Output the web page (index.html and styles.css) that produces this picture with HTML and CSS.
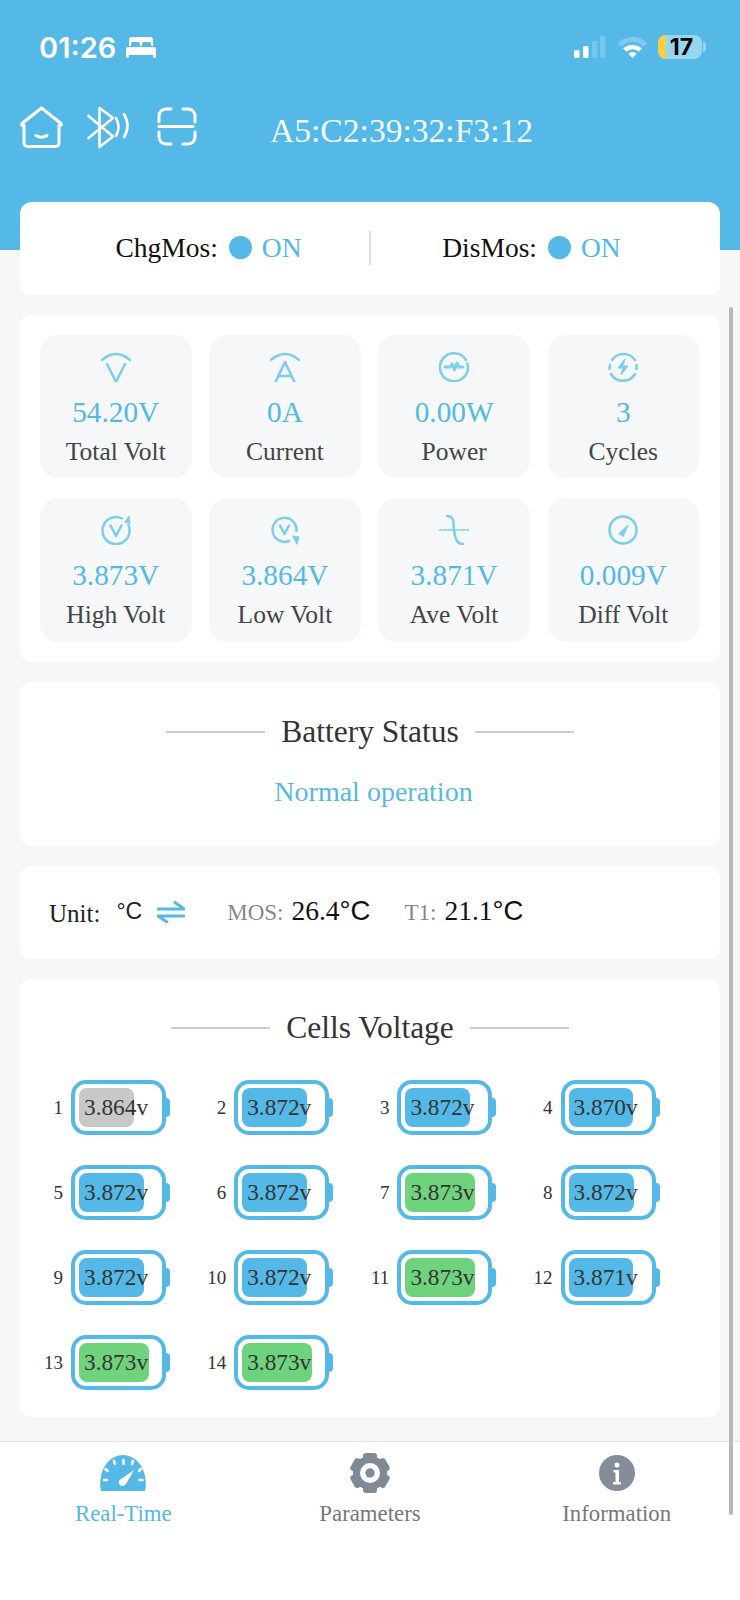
FILE: index.html
```html
<!DOCTYPE html>
<html>
<head>
    <title>Real-Time</title>
    <meta name="viewport" content="width=device-width, initial-scale=1.0">
    <link rel="stylesheet" href="styles.css">
</head>

<body>

<div class="page">

<header class="header">
    <div class="status-bar">
        <div class="status-left">
            <span class="clock">01:26</span>
            <svg class="bed" width="30" height="22" viewBox="0 0 30 22">
                <path fill="#fff" fill-rule="evenodd" d="M6 1h18a3 3 0 0 1 3 3v6h-2V8a2 2 0 0 0-2-2h-5a2 2 0 0 0-2 2v2h-2V8a2 2 0 0 0-2-2H7a2 2 0 0 0-2 2v2H3V4a3 3 0 0 1 3-3zM2 11h26a2 2 0 0 1 2 2v9h-2.500l-.5-3H3l-.5 3H0v-9a2 2 0 0 1 2-2z"/>
            </svg>
        </div>
        <div class="status-right">
            <svg width="32" height="22" viewBox="0 0 32 22">
                <rect x="0" y="14" width="5.500" height="8" rx="1.500" fill="#fff"/>
                <rect x="9" y="10" width="5.500" height="12" rx="1.500" fill="#fff"/>
                <rect x="18" y="5" width="5.500" height="17" rx="1.500" fill="#fff" fill-opacity=".2"/>
                <rect x="26" y="0" width="5.500" height="22" rx="1.500" fill="#fff" fill-opacity=".2"/>
            </svg>
            <svg class="wifi" width="31" height="22" viewBox="0 0 31 22" fill="none">
                <path d="M2.400 8.900a18.500 18.500 0 0 1 26.200 0" stroke="#fff" stroke-opacity=".25" stroke-width="5"/>
                <path d="M7.700 14.200a11 11 0 0 1 15.600 0" stroke="#fff" stroke-width="4.500"/>
                <path d="M11.300 17.800a6 6 0 0 1 8.400 0L15.500 22z" fill="#fff"/>
            </svg>
            <div class="phone-battery">
                <div class="phone-battery-body">
                    <span class="phone-battery-low"></span>
                    <span class="phone-battery-num">17</span>
                </div>
                <span class="phone-battery-tip"></span>
            </div>
        </div>
    </div>

    <div class="toolbar">
        <svg class="tool-home" width="44" height="44" viewBox="0 0 44 44" fill="none" stroke="#fff" stroke-width="3" stroke-linejoin="round" stroke-linecap="round">
            <path d="M22.500 3L3 18.500c-.8.800-.4 1.700.6 1.700H5V38a3.500 3.500 0 0 0 3.500 3.500h28A3.500 3.500 0 0 0 40 38V20.200h1.400c1 0 1.400-.9.600-1.700z"/>
            <path d="M17 30.500q5.500 3.500 11 0"/>
        </svg>
        <svg class="tool-bt" width="44" height="44" viewBox="0 0 44 44" fill="none" stroke="#fff" stroke-width="2.600" stroke-linejoin="round" stroke-linecap="round">
            <path d="M2.500 11L27 31.500 13.500 42V3L27 13 2.500 33"/>
            <path d="M30 13q5 9 0 18"/>
            <path d="M38 9q7 12 0 23"/>
        </svg>
        <svg class="tool-scan" width="40" height="40" viewBox="0 0 40 40" fill="none" stroke="#fff" stroke-width="3" stroke-linecap="round">
            <path d="M2 15V9a7 7 0 0 1 7-7h5M26 2h5a7 7 0 0 1 7 7v6"/>
            <path d="M2 25v5a7 7 0 0 0 7 7h5M26 37h5a7 7 0 0 0 7-7v-5"/>
            <path d="M2 19.500h34"/>
        </svg>
        <span class="mac">A5:C2:39:32:F3:12</span>
    </div>
</header>

<main class="content">

    <section class="card mos-card">
        <div class="mos-item">
            <span>ChgMos:</span><span class="dot"></span><span class="on">ON</span>
        </div>
        <div class="mos-divider"></div>
        <div class="mos-item">
            <span>DisMos:</span><span class="dot"></span><span class="on">ON</span>
        </div>
    </section>

    <section class="card stats-card">
        <div class="tile">
            <svg class="tile-icon" viewBox="0 0 30 30"><path d="M1 8Q15-4 29 8"/><path d="M6 12l9 18 9-18"/></svg>
            <div class="tile-value">54.20V</div>
            <div class="tile-label">Total Volt</div>
        </div>
        <div class="tile">
            <svg class="tile-icon" viewBox="0 0 30 30"><path d="M1 8Q15-4 29 8"/><path d="M5.500 30L15 10l9.500 20M8.500 24h13"/></svg>
            <div class="tile-value">0A</div>
            <div class="tile-label">Current</div>
        </div>
        <div class="tile">
            <svg class="tile-icon" viewBox="0 0 30 30"><path d="M27 8A14 14 0 1 0 29 15c0-1.500-.2-2.500-.6-3.500"/><path d="M6 15h5l2-3 2.500 6 2.500-7 2 4h4" stroke-width="2.800"/></svg>
            <div class="tile-value">0.00W</div>
            <div class="tile-label">Power</div>
        </div>
        <div class="tile">
            <svg class="tile-icon" viewBox="0 0 30 30"><path d="M4 8A14 14 0 0 1 27 8"/><path d="M27 22A14 14 0 0 1 3 22"/><path d="M1.500 17a14 14 0 0 1 .5-4M28.500 13a14 14 0 0 1 0 4"/><path d="M17 7l-7 9h5l-2 7 7-9h-5z" class="solid"/></svg>
            <div class="tile-value">3</div>
            <div class="tile-label">Cycles</div>
        </div>
        <div class="tile">
            <svg class="tile-icon" viewBox="0 0 30 30"><path d="M21 3.500A13.500 13.500 0 1 0 28.500 15c0-2-.3-3.500-1-5"/><path d="M9.500 10.500L15 21l5.500-10.500"/><path d="M24 7l4-6 1 7z" class="solid"/></svg>
            <div class="tile-value">3.873V</div>
            <div class="tile-label">High Volt</div>
        </div>
        <div class="tile">
            <svg class="tile-icon" viewBox="0 0 30 30"><path d="M26.500 16A12 12 0 1 0 19 26"/><path d="M10 10.500L14.500 19l4.500-8.500"/><path d="M23 21l6 1-2 7z" class="solid"/></svg>
            <div class="tile-value">3.864V</div>
            <div class="tile-label">Low Volt</div>
        </div>
        <div class="tile">
            <svg class="tile-icon" viewBox="0 0 30 30"><path d="M8 1c8 0 6 7 7 14s2 14 9 14"/><path d="M0 15h30" stroke-width="1.500" stroke-dasharray="3 1.500"/></svg>
            <div class="tile-value">3.871V</div>
            <div class="tile-label">Ave Volt</div>
        </div>
        <div class="tile">
            <svg class="tile-icon" viewBox="0 0 30 30"><circle cx="15" cy="15" r="13.500"/><path d="M11 18.500l9-8.500-4.500 11z" class="solid"/></svg>
            <div class="tile-value">0.009V</div>
            <div class="tile-label">Diff Volt</div>
        </div>
    </section>

    <section class="card status-card">
        <div class="title"><span class="title-line"></span><span>Battery Status</span><span class="title-line"></span></div>
        <div class="status-text">Normal operation</div>
    </section>

    <section class="card temp-card">
        <span class="unit-label">Unit:</span>
        <span class="unit-value deg">°C</span>
        <svg class="swap" width="28" height="22" viewBox="0 0 28 22" fill="none" stroke="#54b9e6" stroke-width="3" stroke-linecap="round" stroke-linejoin="round">
            <path d="M1 8h26L18 1.500"/>
            <path d="M27 15H1l9 6"/>
        </svg>
        <span class="temp-name temp-mos">MOS:</span>
        <span class="temp-value">26.4<span class="deg">°C</span></span>
        <span class="temp-name temp-t1">T1:</span>
        <span class="temp-value">21.1<span class="deg">°C</span></span>
    </section>

    <section class="card cells-card">
        <div class="title"><span class="title-line"></span><span>Cells Voltage</span><span class="title-line"></span></div>
        <div class="cells" id="cells"></div>
    </section>

</main>

<nav class="tabbar">
    <div class="tab tab-active">
        <svg width="46" height="36" viewBox="0 0 46 36">
            <path fill="#54b9e6" d="M1 36C-2 24 3 1 23 0c20 1 25 24 22 36z"/>
            <g stroke="#fff" stroke-width="2.500" stroke-linecap="round">
                <path d="M4 25h3M39.500 25h3M5.500 14l2 2M41 14l-2 2M14 6l1 3M33 6l-1 3M23.500 5v4"/>
            </g>
            <path fill="#fff" d="M34 15L26 29q-4 4-7 0-1-3 2-5z"/>
        </svg>
        <span>Real-Time</span>
    </div>
    <div class="tab">
        <svg class="gear" width="40" height="40" viewBox="0 0 40 40">
            <g fill="#808a96">
                <rect x="13" y="0" width="14" height="40" rx="3"/>
                <rect x="13" y="0" width="14" height="40" rx="3" transform="rotate(60 20 20)"/>
                <rect x="13" y="0" width="14" height="40" rx="3" transform="rotate(120 20 20)"/>
                <circle cx="20" cy="20" r="17"/>
            </g>
            <circle cx="20" cy="20" r="10" fill="#fff"/>
            <circle cx="20" cy="20" r="4.700" fill="#808a96"/>
        </svg>
        <span>Parameters</span>
    </div>
    <div class="tab">
        <svg width="36" height="36" viewBox="0 0 36 36">
            <circle cx="18" cy="18" r="18" fill="#858c9a"/>
            <circle cx="18" cy="10" r="2.500" fill="#fff"/>
            <path fill="#fff" d="M14.500 15h5.500v12h2v2.500h-8V27h2.500v-9.500h-2z"/>
        </svg>
        <span>Information</span>
    </div>
</nav>

<div class="scrollbar"></div>

</div>

<script>
// cell number, voltage, fill width in px, fill colour class
const cells = [
    [1, "3.864", 55, "low"], [2, "3.872", 65, ""], [3, "3.872", 65, ""], [4, "3.870", 64, ""],
    [5, "3.872", 65, ""], [6, "3.872", 65, ""], [7, "3.873", 70, "high"], [8, "3.872", 65, ""],
    [9, "3.872", 65, ""], [10, "3.872", 65, ""], [11, "3.873", 70, "high"], [12, "3.871", 64, ""],
    [13, "3.873", 70, "high"], [14, "3.873", 70, "high"]
];

const box = document.getElementById("cells");
cells.forEach(c => {
    box.innerHTML += '<div class="cell"><span class="cell-num">' + c[0] + '</span>' +
        '<div class="batt"><span class="batt-fill ' + c[3] + '" style="width:' + c[2] + 'px"></span>' +
        '<span class="batt-text">' + c[1] + 'v</span></div></div>';
});
</script>

</body>
</html>
```

FILE: styles.css
```css
* {
    box-sizing: border-box;
}

body {
    font-family: "Liberation Serif", serif;
    margin: 0;
    padding: 0;
    background: #f7f7f7;
    color: #222;
}

.page {
    position: relative;
    width: 740px;
    height: 1600px;
    display: flex;
    flex-direction: column;
    overflow: hidden;
}

.header {
    height: 250px;
    background: #54b9e6;
    color: white;
}

.status-bar {
    height: 94px;
    padding: 0 34px 0 39px;
    display: flex;
    align-items: center;
    justify-content: space-between;
}

.status-left {
    display: flex;
    align-items: center;
    gap: 10px;
}

.clock {
    font-family: Inter, sans-serif;
    font-weight: 600;
    font-size: 29px;
}

.status-right {
    display: flex;
    align-items: center;
}

.wifi {
    margin-left: 11px;
}

.phone-battery {
    display: flex;
    align-items: center;
    margin-left: 10px;
}

.phone-battery-body {
    position: relative;
    width: 44px;
    height: 24px;
    border-radius: 8px;
    background: rgba(255,255,255,0.4);
    display: flex;
    align-items: center;
    justify-content: center;
}

.phone-battery-low {
    position: absolute;
    left: 0;
    top: 0;
    bottom: 0;
    width: 8px;
    border-radius: 8px 0 0 8px;
    background: #f7cf45;
}

.phone-battery-num {
    position: relative;
    font-family: Inter, sans-serif;
    font-weight: 700;
    font-size: 23px;
    line-height: 24px;
    color: #000;
    margin-left: 3px;
}

.phone-battery-tip {
    width: 3px;
    height: 10px;
    margin-left: 1px;
    border-radius: 0 3px 3px 0;
    background: rgba(255,255,255,0.4);
}

.toolbar {
    height: 66px;
    padding-left: 19px;
    display: flex;
    align-items: center;
}

.tool-bt {
    margin-left: 23px;
}

.tool-scan {
    margin-left: 27px;
}

.mac {
    margin-left: 73px;
    margin-top: 7px;
    font-size: 33.600px;
    color: #f2fafd;
}

.content {
    margin-top: -48px;
    padding: 0 20px;
    display: flex;
    flex-direction: column;
    gap: 20px;
}

.card {
    background: white;
    border-radius: 12px;
}

.mos-card {
    height: 93px;
    padding: 0 28px 2px;
    display: flex;
    align-items: center;
}

.mos-item {
    flex: 1;
    display: flex;
    align-items: center;
    justify-content: center;
    font-size: 27.500px;
    color: #111;
}

.mos-divider {
    width: 2px;
    height: 34px;
    background: #ddd;
}

.dot {
    width: 23px;
    height: 23px;
    margin: 0 10px 0 11px;
    border-radius: 50%;
    background: #54b9e6;
}

.on {
    color: #54b9e6;
}

.stats-card {
    padding: 20px;
    display: grid;
    grid-template-columns: repeat(4, 151.500px);
    gap: 20px 17.700px;
}

.tile {
    height: 143px;
    padding-top: 17px;
    background: #f5f7f9;
    border-radius: 18px;
    text-align: center;
}

.tile:nth-child(n+5) {
    height: 144px;
}

.tile-icon {
    display: block;
    width: 30px;
    height: 30px;
    margin: 0 auto;
    fill: none;
    stroke: #7dcdec;
    stroke-width: 2.500;
    stroke-linecap: round;
    stroke-linejoin: round;
}

.tile-icon .solid {
    fill: #7dcdec;
    stroke-width: 1;
}

.tile-value {
    margin-top: 13px;
    font-size: 29.300px;
    line-height: 34px;
    color: #54b9e6;
}

.tile-label {
    margin-top: 8px;
    font-size: 25.500px;
    line-height: 30px;
    color: #444;
}

.status-card {
    height: 164px;
    padding-top: 30px;
}

.title {
    display: flex;
    align-items: center;
    justify-content: center;
    gap: 16px;
    height: 40px;
    font-size: 31.500px;
    color: #333;
}

.title-line {
    width: 99px;
    height: 2px;
    background: #ccc;
}

.status-text {
    margin-top: 23px;
    padding-left: 7px;
    font-size: 28px;
    line-height: 34px;
    text-align: center;
    color: #54b9e6;
}

.temp-card {
    height: 93px;
    padding: 0 0 6px 29px;
    display: flex;
    align-items: center;
}

.deg {
    font-family: "Liberation Sans", sans-serif;
}

.unit-label {
    font-size: 25px;
    margin-top: 8px;
}

.unit-value {
    margin-left: 16px;
    font-size: 23px;
    margin-top: 4px;
}

.swap {
    margin-left: 15px;
    margin-top: 4px;
}

.temp-name {
    font-size: 23px;
    color: #888;
    margin-top: 6px;
}

.temp-mos {
    margin-left: 42px;
}

.temp-t1 {
    margin-left: 34px;
}

.temp-value {
    margin-left: 8px;
    font-size: 27.500px;
    color: #111;
    margin-top: 3px;
}

.cells-card {
    height: 438px;
    padding-top: 29px;
}

.cells {
    margin-top: 32px;
    padding-left: 20px;
    display: grid;
    grid-template-columns: repeat(4, 163.200px);
    row-gap: 30px;
}

.cell {
    display: flex;
    align-items: center;
}

.cell-num {
    width: 23px;
    margin-right: 8px;
    font-size: 19px;
    text-align: right;
    color: #333;
}

.batt {
    position: relative;
    width: 95px;
    height: 55px;
    padding-left: 9px;
    border: 4px solid #54b9e6;
    border-radius: 15px;
    display: flex;
    align-items: center;
    color: #333;
    font-size: 23.300px;
}

.batt::after {
    content: "";
    position: absolute;
    right: -8px;
    top: 14px;
    width: 4px;
    height: 19px;
    background: #54b9e6;
    border-radius: 0 4px 4px 0;
}

.batt-fill {
    position: absolute;
    left: 4px;
    top: 4px;
    bottom: 4px;
    background: #54b9e6;
    border-radius: 8px;
}

.batt-fill.low {
    background: #c8c8c8;
}

.batt-fill.high {
    background: #6fd37e;
}

.batt-text {
    position: relative;
}

.tabbar {
    margin-top: auto;
    height: 159px;
    padding-top: 13px;
    background: white;
    border-top: 1px solid #e4e4e4;
    display: grid;
    grid-template-columns: repeat(3, 1fr);
}

.tab {
    display: flex;
    flex-direction: column;
    align-items: center;
    height: 72px;
    justify-content: space-between;
    font-size: 22.800px;
    color: #777;
}

.gear {
    margin-top: -2px;
}

.tab-active {
    color: #54b9e6;
}

.scrollbar {
    position: absolute;
    left: 729px;
    top: 307px;
    width: 4px;
    height: 1208px;
    background: #b8b8b8;
    border-radius: 2px;
}
```
